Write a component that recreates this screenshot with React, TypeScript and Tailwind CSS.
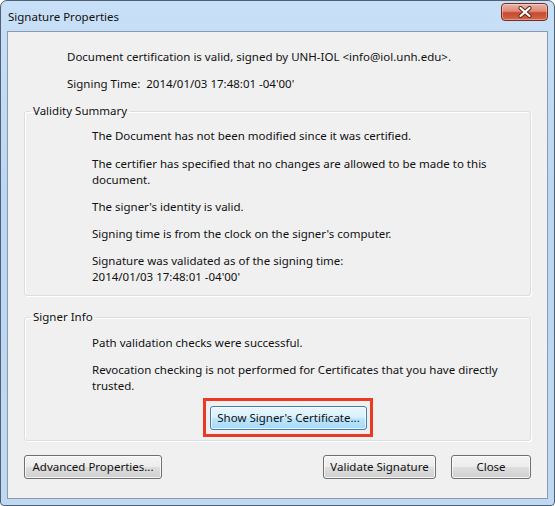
import React from "react";

function Btn({
  children,
  className = "",
  focused = false,
}: {
  children: React.ReactNode;
  className?: string;
  focused?: boolean;
}) {
  return (
    <div
      className={
        "flex h-[24px] items-center justify-center rounded-[3px] border leading-[16px] shadow-[inset_0_0_0_1px_rgba(255,255,255,0.75)] " +
        (focused
          ? "border-[#3c7fb1] bg-[linear-gradient(#eaf6fd_0%,#d9f0fc_48%,#bee6fd_52%,#a7d9f5_100%)] "
          : "border-[#707070] bg-[linear-gradient(#f4f4f4_0%,#ececec_48%,#dedede_52%,#d0d0d0_100%)] ") +
        className
      }
    >
      {children}
    </div>
  );
}

function CloseButton() {
  return (
    <div className="mt-[2px] flex h-[18px] w-[47px] items-center justify-center rounded-[4px] border border-[#7a2b1f] bg-[linear-gradient(#eab3a6_0%,#dd8a77_45%,#c84a30_55%,#d4654a_100%)] shadow-[inset_0_0_0_1px_rgba(255,255,255,0.35)]">
      <svg width="16" height="12" viewBox="0 0 16 12">
        <path
          d="M3.5 2 L12.5 10 M12.5 2 L3.5 10"
          stroke="#5a1e14"
          strokeWidth="4"
          strokeLinecap="round"
          fill="none"
        />
        <path
          d="M3.5 2 L12.5 10 M12.5 2 L3.5 10"
          stroke="#ffffff"
          strokeWidth="2.3"
          strokeLinecap="round"
          fill="none"
        />
      </svg>
    </div>
  );
}

export default function App() {
  return (
    <div className="h-[506px] w-[555px] bg-white font-['Noto_Sans',sans-serif] text-[11.5px] text-[#111]">
      <div className="flex h-full flex-col rounded-t-[7px] rounded-b-[4px] border border-[#4f6072] bg-[linear-gradient(#c8e0f7_0%,#bbd6f1_40%,#bfd9f2_100%)] px-[6px] pb-[6px]">
        {/* title bar */}
        <div className="flex h-[30px] items-start justify-between">
          <span className="mt-[8px] pl-[1px] leading-[16px]">Signature Properties</span>
          <CloseButton />
        </div>

        {/* client area */}
        <div className="flex flex-1 flex-col border border-[#8a9bb0] bg-[#f0f0f0] px-[16px] pt-[17px]">
          <div className="flex flex-col gap-[11px] pl-[43px] leading-[16px]">
            <div>Document certification is valid, signed by UNH-IOL &lt;info@iol.unh.edu&gt;.</div>
            <div>Signing Time:&nbsp; 2014/01/03 17:48:01 -04'00'</div>
          </div>

          <fieldset className="mt-[11px] rounded-[3px] border border-[#d5dfe5] shadow-[inset_1px_1px_0_#ffffff,1px_1px_0_#ffffff]">
            <legend className="ml-[5px] px-[3px] leading-[16px]">Validity Summary</legend>
            <div className="flex flex-col gap-[11px] pb-[10px] pl-[67px] pt-[9px] leading-[16px]">
              <div>The Document has not been modified since it was certified.</div>
              <div className="mt-[1px]">
                The certifier has specified that no changes are allowed to be made to this
                <br />
                document.
              </div>
              <div>The signer's identity is valid.</div>
              <div>Signing time is from the clock on the signer's computer.</div>
              <div>
                Signature was validated as of the signing time:
                <br />
                2014/01/03 17:48:01 -04'00'
              </div>
            </div>
          </fieldset>

          <fieldset className="mt-[13px] rounded-[3px] border border-[#d5dfe5] shadow-[inset_1px_1px_0_#ffffff,1px_1px_0_#ffffff]">
            <legend className="ml-[5px] px-[3px] leading-[16px]">Signer Info</legend>
            <div className="flex flex-col gap-[11px] pl-[67px] pt-[10px] leading-[16px]">
              <div>Path validation checks were successful.</div>
              <div>
                Revocation checking is not performed for Certificates that you have directly
                <br />
                trusted.
              </div>
            </div>
            <div className="mb-[3px] ml-[178px] mt-[4px] flex w-fit border-[3px] border-[#ea3a23] pb-[4px] pl-[4px] pr-[3px] pt-[5px]">
              <Btn focused className="w-[157px]">
                Show Signer's Certificate...
              </Btn>
            </div>
          </fieldset>

          <div className="mt-[14px] flex items-center">
            <Btn className="w-[138px]">Advanced Properties...</Btn>
            <div className="flex-1" />
            <Btn className="w-[113px]">Validate Signature</Btn>
            <Btn className="ml-[15px] w-[80px]">Close</Btn>
          </div>
        </div>
      </div>
    </div>
  );
}
